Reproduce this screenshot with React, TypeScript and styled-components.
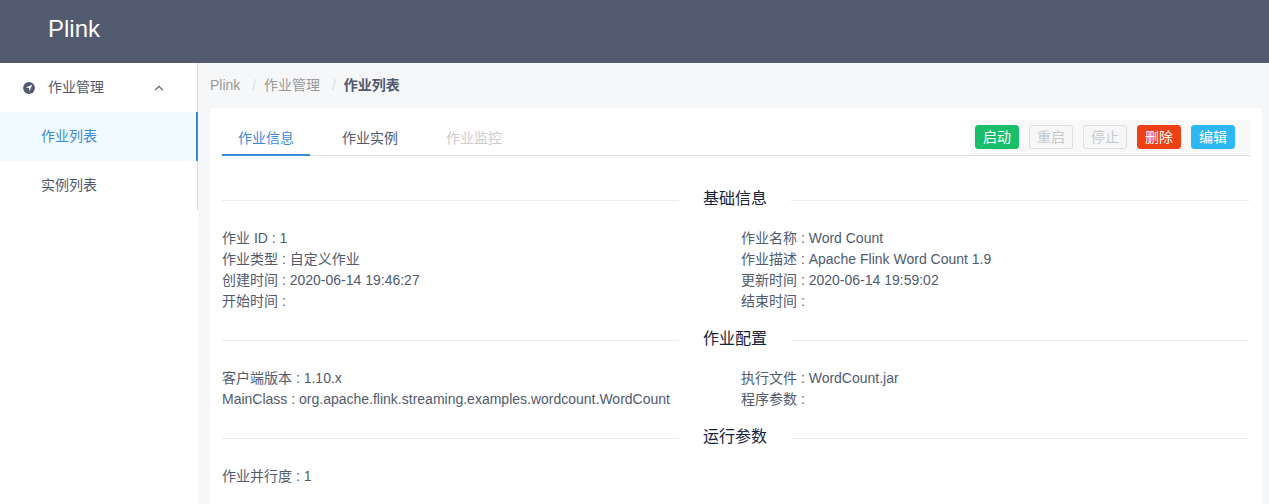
import React from 'react';
import styled, { createGlobalStyle, css } from 'styled-components';

const GlobalStyle = createGlobalStyle`
  *, *::before, *::after { box-sizing: border-box; }
  body {
    margin: 0;
    height: 504px;
    overflow: hidden;
    background: #f5f7f9;
    color: #515a6e;
    font: 14px/21px "Liberation Sans", "Noto Sans CJK SC", sans-serif;
  }
`;

const Page = styled.div`
  display: flex;
  flex-direction: column;
  height: 504px;
`;

const Header = styled.header`
  flex: none;
  height: 63px;
  padding: 0 48px;
  background: #515a6e;
  color: #fff;
  font-size: 24px;
  line-height: 58px;
`;

const Body = styled.div`
  display: flex;
  flex: 1;
  min-height: 0;
`;

const Sidebar = styled.aside`
  flex: none;
  width: 198px;
  background: #fff;
`;

const Menu = styled.nav`
  display: flex;
  flex-direction: column;
  box-shadow: inset -1px 0 #dcdee2;
`;

const MenuTitle = styled.div`
  display: flex;
  align-items: center;
  height: 49px;
  padding: 0 34px 0 23px;

  span { flex: 1; margin-left: 13px; }
`;

const MenuItem = styled.a<{ $active?: boolean }>`
  height: 49px;
  padding-left: 41px;
  line-height: 49px;
  ${({ $active }) => $active && css`
    background: #f0faff;
    color: #3a8ada;
    border-right: 2px solid #3a8ada;
  `}
`;

const Content = styled.main`
  flex: 1;
  display: flex;
  flex-direction: column;
  padding: 0 7px 0 12px;
`;

const Breadcrumb = styled.div`
  display: flex;
  flex: none;
  height: 45px;
  line-height: 45px;
  color: #999;
`;

const Separator = styled.span`
  margin: 0 7.75px 0 12px;
  color: #dcdee2;
`;

const Current = styled.span`
  font-weight: 700;
  color: #515a6e;
`;

const Card = styled.section`
  flex: 1;
  padding: 12px 12px 0;
  background: #fff;
  border-radius: 2px 2px 0 0;
`;

const TabBar = styled.div`
  display: flex;
  justify-content: space-between;
  height: 36px;
  box-shadow: inset 0 -1px #dcdee2;
`;

const TabList = styled.div`
  display: flex;
  gap: 16px;
`;

const Tab = styled.div<{ $state?: 'active' | 'disabled' }>`
  padding: 0 16px;
  line-height: 36px;
  ${({ $state }) => $state === 'active' && css`
    color: #3a8ada;
    border-bottom: 2px solid #3a8ada;
  `}
  ${({ $state }) => $state === 'disabled' && css`color: #ccc;`}
`;

const Actions = styled.div`
  display: flex;
  gap: 10px;
  height: 34px;
  padding: 5px 15px 5px 5px;
  background: #f8f8f9;
`;

const Button = styled.button<{ $color?: string }>`
  width: 44px;
  height: 24px;
  padding: 0;
  border: 1px solid ${({ $color }) => $color ?? '#dcdee2'};
  border-radius: 3px;
  background: ${({ $color }) => $color ?? '#f7f7f7'};
  color: ${({ $color }) => ($color ? '#fff' : '#c5c8ce')};
  font: inherit;
  line-height: 22px;
`;

const Divider = styled.div`
  display: flex;
  align-items: center;
  gap: 24px;
  height: 24px;
  margin: 16px 1px 16px 0;
  color: #17233d;
  font-size: 16px;
  line-height: 21px;

  &::before, &::after {
    content: '';
    height: 1px;
    margin-top: 1px;
    background: #e8eaec;
  }

  &::before { width: 457px; }
  &::after { flex: 1; }

  span { padding-bottom: 3px; }
`;

const Sections = styled.div`
  padding-top: 16px;
`;

const Fields = styled.div`
  display: grid;
  grid-template-columns: 519px 1fr;
  grid-auto-rows: 21px;
  white-space: nowrap;
`;

const NavigateIcon = () => (
  <svg width="12" height="12" viewBox="0 0 12 12">
    <circle cx="6" cy="6" r="5.9" fill="#515a6e" />
    <path d="M9.2 2.8 6.5 9.2 6.1 6 2.8 5.6z" fill="#fff" />
  </svg>
);

const ChevronUp = () => (
  <svg width="10" height="6" viewBox="0 0 10 6" fill="none" stroke="#515a6e" strokeWidth="1.2">
    <path d="M1.2 5.2 5 1.4 8.8 5.2" />
  </svg>
);

const sections: { title: string; fields: string[] }[] = [
  {
    title: '基础信息',
    fields: [
      '作业 ID : 1', '作业名称 : Word Count',
      '作业类型 : 自定义作业', '作业描述 : Apache Flink Word Count 1.9',
      '创建时间 : 2020-06-14 19:46:27', '更新时间 : 2020-06-14 19:59:02',
      '开始时间 :', '结束时间 :',
    ],
  },
  {
    title: '作业配置',
    fields: [
      '客户端版本 : 1.10.x', '执行文件 : WordCount.jar',
      'MainClass : org.apache.flink.streaming.examples.wordcount.WordCount', '程序参数 :',
    ],
  },
  { title: '运行参数', fields: ['作业并行度 : 1'] },
];

export default function App() {
  return (
    <Page>
      <GlobalStyle />
      <Header>Plink</Header>
      <Body>
        <Sidebar>
          <Menu>
            <MenuTitle><NavigateIcon /><span>作业管理</span><ChevronUp /></MenuTitle>
            <MenuItem $active>作业列表</MenuItem>
            <MenuItem>实例列表</MenuItem>
          </Menu>
        </Sidebar>
        <Content>
          <Breadcrumb>
            <span>Plink</span><Separator>/</Separator>
            <span>作业管理</span><Separator>/</Separator>
            <Current>作业列表</Current>
          </Breadcrumb>
          <Card>
            <TabBar>
              <TabList>
                <Tab $state="active">作业信息</Tab>
                <Tab>作业实例</Tab>
                <Tab $state="disabled">作业监控</Tab>
              </TabList>
              <Actions>
                <Button $color="#19be6b">启动</Button>
                <Button disabled>重启</Button>
                <Button disabled>停止</Button>
                <Button $color="#ed4014">删除</Button>
                <Button $color="#2db7f5">编辑</Button>
              </Actions>
            </TabBar>
            <Sections>
              {sections.map(({ title, fields }) => (
                <React.Fragment key={title}>
                  <Divider><span>{title}</span></Divider>
                  <Fields>{fields.map((field) => <div key={field}>{field}</div>)}</Fields>
                </React.Fragment>
              ))}
            </Sections>
          </Card>
        </Content>
      </Body>
    </Page>
  );
}
